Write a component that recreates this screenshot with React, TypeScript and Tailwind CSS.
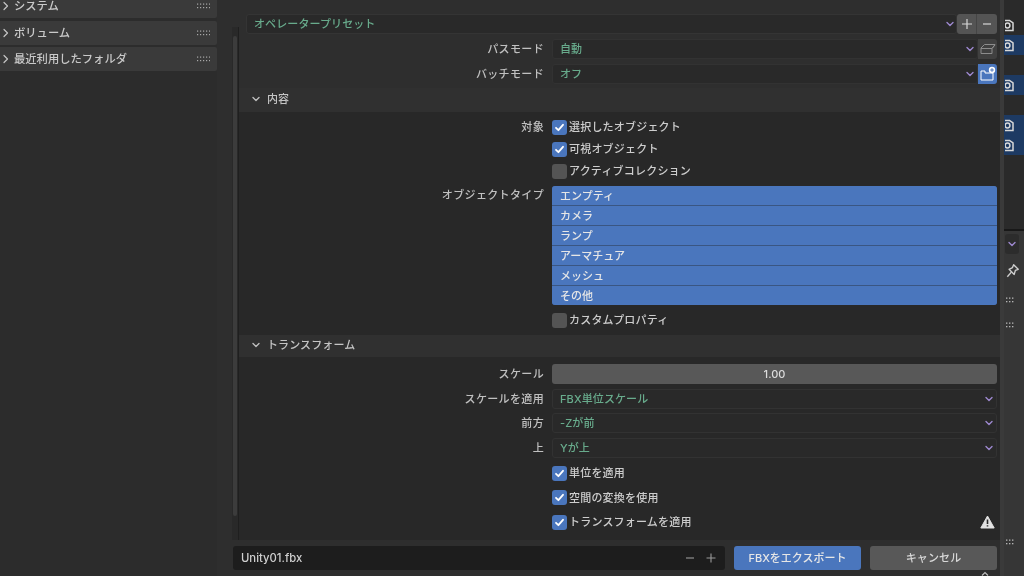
import React from "react";

const font = { fontFamily: '"Inter", "Noto Sans CJK JP", sans-serif' };

function Chevron({ className = "" }: { className?: string }) {
  return (
    <svg width="10" height="10" viewBox="0 0 10 10" className={className} fill="none" stroke="currentColor" strokeWidth="1.4" strokeLinecap="round" strokeLinejoin="round">
      <path d="M2 3.5 5 6.5 8 3.5" />
    </svg>
  );
}

function ChevronRight() {
  return (
    <svg width="8" height="10" viewBox="0 0 8 10" fill="none" stroke="#c4c4c4" strokeWidth="1.2" strokeLinecap="round" strokeLinejoin="round">
      <path d="M2 1.5 5.5 5 2 8.5" />
    </svg>
  );
}

function Dots({ className = "" }: { className?: string }) {
  return (
    <svg width="13" height="6" viewBox="0 0 13 6" className={className} fill="#a8a8a8">
      {[0, 3, 6, 9, 12].map((x) => (
        <g key={x}>
          <rect x={x} y="0.5" width="1.2" height="1.2" />
          <rect x={x} y="4" width="1.2" height="1.2" />
        </g>
      ))}
    </svg>
  );
}

function VDots({ className = "" }: { className?: string }) {
  return (
    <svg width="8" height="6" viewBox="0 0 8 6" className={className} fill="#b4b4b4">
      {[0, 3, 6].map((x) => (
        <g key={x}>
          <rect x={x} y="0.5" width="1.4" height="1.3" />
          <rect x={x} y="4" width="1.4" height="1.3" />
        </g>
      ))}
    </svg>
  );
}

function SideRow({ label, className }: { label: string; className: string }) {
  return (
    <div className={`flex h-[24px] items-center bg-[#3a3a3a] pl-[2px] pr-[7px] text-[11.3px] text-[#c9c9c9] ${className}`}>
      <ChevronRight />
      <span className="ml-[4px] flex-1 whitespace-nowrap pt-[1px]">{label}</span>
      <Dots />
    </div>
  );
}

function Select({ text, className = "" }: { text: string; className?: string }) {
  return (
    <div className={`flex h-[20px] items-center rounded-[3px] border border-[#323232] bg-[#292929] pl-[7px] pr-[2px] text-[11px] tracking-[0.1px] text-[#68ab8c] ${className}`}>
      <span className="flex-1 whitespace-nowrap pt-[1px]">{text}</span>
      <Chevron className="text-[#9d88cf]" />
    </div>
  );
}

function Prop({ label, className = "", children }: { label?: string; className?: string; children: React.ReactNode }) {
  return (
    <div className={`flex items-center pr-[3px] ${className}`}>
      <div className="w-[305px] shrink-0 whitespace-nowrap pt-[1px] text-right text-[11px] tracking-[0.35px] text-[#c0c0c0]">{label}</div>
      <div className="ml-[8px] flex-1">{children}</div>
    </div>
  );
}

function Check({ text, on = true }: { text: string; on?: boolean }) {
  return (
    <div className="flex items-center text-[11px] tracking-[0.2px] text-[#cdcdcd]">
      <div className={`flex h-[15px] w-[15px] items-center justify-center rounded-[3px] ${on ? "bg-[#4a76bd]" : "bg-[#545454]"}`}>
        {on && (
          <svg width="11" height="11" viewBox="0 0 11 11" fill="none" stroke="#fff" strokeWidth="1.8" strokeLinecap="round" strokeLinejoin="round">
            <path d="M2 5.8 4.4 8.2 9 2.8" />
          </svg>
        )}
      </div>
      <span className="ml-[2px] whitespace-nowrap pt-[1px]">{text}</span>
    </div>
  );
}

function SectionHeader({ text, className }: { text: string; className: string }) {
  return (
    <div className={`flex items-center bg-[#303030] pb-[2px] pl-[12px] text-[11px] tracking-[0.1px] text-[#c4c4c4] ${className}`}>
      <Chevron className="text-[#bdbdbd]" />
      <span className="ml-[6px] whitespace-nowrap">{text}</span>
    </div>
  );
}

function OutIcon() {
  return (
    <svg width="9" height="13" viewBox="0 0 9 13" className="ml-[1px]" fill="none" stroke="#d8d8d8" strokeWidth="1.5">
      <path d="M0 1.5H4.5L8 4V11.5H0" />
      <circle cx="2.5" cy="6.5" r="2.4" />
    </svg>
  );
}

const outRows = [false, true, false, true, false, true, true];
const objTypes = ["エンプティ", "カメラ", "ランプ", "アーマチュア", "メッシュ", "その他"];

export default function App() {
  return (
    <div className="flex h-[576px] w-[1024px] overflow-hidden bg-[#2c2c2c] font-medium blur-[0.45px]" style={font}>
      {/* file browser side panel */}
      <div className="flex w-[217px] shrink-0 flex-col gap-[2.5px] bg-[#2c2c2c]">
        <SideRow label="システム" className="-mt-[6px] rounded-br-[2px]" />
        <SideRow label="ボリューム" className="rounded-r-[2px]" />
        <SideRow label="最近利用したフォルダ" className="rounded-r-[2px]" />
      </div>

      {/* dialog centre */}
      <div className="flex w-[783px] shrink-0 flex-col bg-[#2e2e2e]">
        <div className="flex h-[540px] shrink-0">
          <div className="w-[15px] shrink-0" />
          <div className="mt-[27px] flex w-[6px] shrink-0 justify-center bg-[#292929] pt-[9px]">
            <div className="h-[480px] w-[4px] rounded-[2px] bg-[#3c3c3c]" />
          </div>
          <div className="mt-[27px] w-[1px] shrink-0 self-stretch bg-[#1f1f1f]" />
          <div className="flex min-w-0 flex-1 flex-col">
            {/* top */}
            <div className="h-[88px] shrink-0 bg-[#2e2e2e] pt-[14px]">
              <div className="flex pl-[7px] pr-[3px]">
                <div className="flex h-[20px] flex-1 items-center rounded-[3px] border border-[#343434] bg-[#292929] pl-[7px] pr-[1px] text-[11px] tracking-[0.1px] text-[#68ab8c]">
                  <span className="flex-1 whitespace-nowrap pt-[1px]">オペレータープリセット</span>
                  <Chevron className="text-[#9d88cf]" />
                </div>
                <div className="flex h-[20px] w-[40px] items-center rounded-[3px] bg-[#545454] text-[#d8d8d8]">
                  <div className="flex h-full w-[20px] items-center justify-center border-r border-[#454545]">
                    <svg width="12" height="12" viewBox="0 0 12 12" stroke="currentColor" strokeWidth="1.2"><path d="M6 1V11M1 6H11" /></svg>
                  </div>
                  <div className="flex h-full flex-1 items-center justify-center">
                    <svg width="12" height="12" viewBox="0 0 12 12" stroke="currentColor" strokeWidth="1.2"><path d="M2 6H10" /></svg>
                  </div>
                </div>
              </div>
              <Prop label="パスモード" className="mt-[5px]">
                <div className="flex">
                  <Select text="自動" className="flex-1" />
                  <div className="flex h-[20px] w-[19px] items-center justify-center rounded-r-[3px] bg-[#404040]">
                    <svg width="16" height="12" viewBox="0 0 16 12" fill="none" stroke="#8c8c8c" strokeWidth="1" strokeLinejoin="round">
                      <path d="M1 5 4.5 1.5H15L12 5.5V10.5H1Z" />
                      <path d="M1 5.5H12L15 2" />
                    </svg>
                  </div>
                </div>
              </Prop>
              <Prop label="バッチモード" className="mt-[5px]">
                <div className="flex">
                  <Select text="オフ" className="flex-1" />
                  <div className="flex h-[20px] w-[19px] items-center justify-center rounded-r-[3px] bg-[#4a76bd]">
                    <svg width="17" height="16" viewBox="0 0 17 16">
                      <path d="M2 5H6V7H14V14H2Z" fill="none" stroke="#fff" strokeWidth="1" />
                      <circle cx="13" cy="4" r="3.2" fill="#fff" />
                      <path d="M13 2.2V5.8M11.2 4H14.8" stroke="#4a76bd" strokeWidth="1" />
                    </svg>
                  </div>
                </div>
              </Prop>
            </div>

            <SectionHeader text="内容" className="h-[24px] shrink-0" />

            {/* content */}
            <div className="flex h-[223px] shrink-0 flex-col bg-[#282828] pt-[4px]">
              <Prop label="対象" className="h-[22px]"><Check text="選択したオブジェクト" /></Prop>
              <Prop className="h-[22px]"><Check text="可視オブジェクト" /></Prop>
              <Prop className="h-[22px]"><Check text="アクティブコレクション" on={false} /></Prop>
              <Prop label="オブジェクトタイプ" className="mt-[4px] items-start">
                <div className="flex flex-col overflow-hidden rounded-[3px] bg-[#3a5682]">
                  {objTypes.map((t, i) => (
                    <div key={t} className={`flex h-[19px] items-center bg-[#4a76bd] pl-[8px] text-[11px] text-[#e6e6e6] ${i > 0 ? "mt-[1px]" : ""}`}>
                      <span className="pt-[1px]">{t}</span>
                    </div>
                  ))}
                </div>
              </Prop>
              <Prop className="mt-[6px] h-[18px]"><Check text="カスタムプロパティ" on={false} /></Prop>
            </div>

            <SectionHeader text="トランスフォーム" className="h-[22px] shrink-0" />

            {/* transform */}
            <div className="relative flex flex-1 flex-col bg-[#282828] pt-[7px]">
              <Prop label="スケール">
                <div className="flex h-[20px] items-center justify-center rounded-[3px] bg-[#585858] text-[11px] text-[#dcdcdc]">1.00</div>
              </Prop>
              <Prop label="スケールを適用" className="mt-[4.5px]"><Select text="FBX単位スケール" /></Prop>
              <Prop label="前方" className="mt-[4.5px]"><Select text="-Zが前" /></Prop>
              <Prop label="上" className="mt-[4.5px]"><Select text="Yが上" /></Prop>
              <Prop className="mt-[5.5px] h-[20px]"><Check text="単位を適用" /></Prop>
              <Prop className="mt-[4.5px] h-[20px]"><Check text="空間の変換を使用" /></Prop>
              <Prop className="mt-[4.5px] h-[20px]"><Check text="トランスフォームを適用" /></Prop>
              <svg className="absolute left-[741px] top-[158px]" width="15" height="14" viewBox="0 0 15 14">
                <path d="M7.5 1 14.2 13H.8Z" fill="#e2e2e2" stroke="#e2e2e2" strokeLinejoin="round" />
                <path d="M7.5 4.5V9M7.5 10.2V11.6" stroke="#282828" strokeWidth="1.6" />
              </svg>
            </div>
          </div>
        </div>

        {/* footer */}
        <div className="relative flex h-[36px] shrink-0 pl-[16px] pt-[6px]">
          <div className="flex h-[24px] w-[492px] items-center rounded-[3px] bg-[#1d1d1d] pl-[8px] text-[11.3px] text-[#cfcfcf]">
            <span className="flex-1">Unity01.fbx</span>
            <svg width="12" height="12" viewBox="0 0 12 12" stroke="#9a9a9a" strokeWidth="1.1"><path d="M2 6H10" /></svg>
            <svg className="ml-[9px] mr-[8px]" width="12" height="12" viewBox="0 0 12 12" stroke="#9a9a9a" strokeWidth="1.1"><path d="M6 1.5V10.5M1.5 6H10.5" /></svg>
          </div>
          <button className="ml-[9px] h-[24px] w-[127px] rounded-[3px] bg-[#4a76bd] text-[11px] text-[#e6e6e6]">FBXをエクスポート</button>
          <button className="ml-[9px] h-[24px] w-[127px] rounded-[3px] bg-[#585858] text-[11px] tracking-[0.1px] text-[#d8d8d8]">キャンセル</button>
          <svg className="absolute left-[763px] top-[31px]" width="10" height="5" viewBox="0 0 10 5" fill="none" stroke="#bdbdbd" strokeWidth="1.2"><path d="M2 4.5 5 1.5 8 4.5" /></svg>
        </div>
      </div>

      {/* right edge */}
      <div className="w-[4px] shrink-0 bg-[#3a3a3a]" />
      <div className="flex min-w-0 flex-1 flex-col bg-[#2a2a2a]">
        <div className="h-[231px] shrink-0 overflow-hidden border-b-[2px] border-[#181818] pt-[15px]">
          {outRows.map((on, i) => (
            <div key={i} className={`flex h-[20px] items-center ${on ? "bg-[#1d3a63]" : ""}`}>
              {(i === 0 || on) && <OutIcon />}
            </div>
          ))}
        </div>
        <div className="flex flex-1 flex-col bg-[#363636] pl-[1px]">
          <div className="mt-[3px] flex h-[20px] w-[14px] items-center justify-center rounded-[3px] bg-[#2c2c2c]">
            <Chevron className="text-[#9d88cf]" />
          </div>
          <svg className="mt-[9px]" width="15" height="16" viewBox="0 0 13 14" fill="none" stroke="#cfcfcf" strokeWidth="1.2" strokeLinejoin="round">
            <path d="M7.5 1.5 11.5 5.5 9 6.5 8 10 3.5 5.5 6.5 4Z" />
            <path d="M5.5 8 2 12" />
          </svg>
          <VDots className="mt-[18px] ml-[1px]" />
          <VDots className="mt-[19px] ml-[1px]" />
          <VDots className="mt-[211px] ml-[1px]" />
        </div>
      </div>
    </div>
  );
}
